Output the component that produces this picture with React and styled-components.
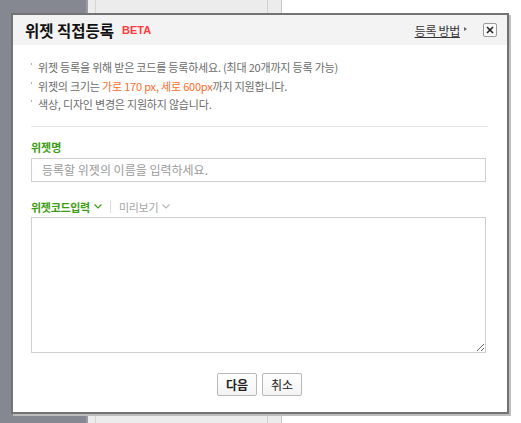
import styled, { createGlobalStyle } from "styled-components";

const GlobalStyle = createGlobalStyle`
  html, body {
    margin: 0;
    padding: 0;
  }
  body {
    width: 521px;
    height: 423px;
    overflow: hidden;
    font-family: "Noto Sans CJK KR", "Noto Sans", sans-serif;
  }
`;

function App() {
  return (
    <>
      <GlobalStyle />
      <PageStyled>
        <div className="side"></div>
        <div className="edge"></div>
        <div className="gutter"></div>
        <div className="panel"></div>
        <div className="rail"></div>
        <div className="blank"></div>

        <DialogStyled>
          <Header>
            <Title>
              위젯 직접등록 <Beta>BETA</Beta>
            </Title>
            <HeaderRight>
              <HelpLink href="#">등록 방법</HelpLink>
              <Arrow />
              <CloseButton aria-label="닫기">
                <svg width="8" height="8" viewBox="0 0 8 8">
                  <path d="M1 1L7 7M7 1L1 7" stroke="#222" strokeWidth="1.6" />
                </svg>
              </CloseButton>
            </HeaderRight>
          </Header>

          <Body>
            <InfoList>
              <li>위젯 등록을 위해 받은 코드를 등록하세요. (최대 20개까지 등록 가능)</li>
              <li>
                위젯의 크기는 <Accent>가로 170 px, 세로 600px</Accent>까지 지원합니다.
              </li>
              <li>색상, 디자인 변경은 지원하지 않습니다.</li>
            </InfoList>

            <FieldLabel>위젯명</FieldLabel>
            <TextInput placeholder="등록할 위젯의 이름을 입력하세요." />

            <TabRow>
              <Tab $active>
                위젯코드입력 <Chevron $active />
              </Tab>
              <TabDivider />
              <Tab>
                미리보기 <Chevron />
              </Tab>
            </TabRow>
            <CodeArea />

            <ButtonRow>
              <Button $primary>다음</Button>
              <Button>취소</Button>
            </ButtonRow>
          </Body>
        </DialogStyled>
      </PageStyled>
    </>
  );
}

function Chevron({ $active }) {
  return (
    <svg width="8" height="5" viewBox="0 0 8 5" style={{ marginLeft: 4 }}>
      <path
        d="M0.5 0.5L4 4L7.5 0.5"
        fill="none"
        stroke={$active ? "#3d9d12" : "#b5b5b5"}
        strokeWidth="1.2"
      />
    </svg>
  );
}

const PageStyled = styled.div`
  position: relative;
  display: flex;
  width: 521px;
  height: 423px;

  .side {
    width: 86px;
    background: #858891;
  }
  .edge {
    width: 2px;
    background: #9a9ca2;
  }
  .gutter {
    width: 7px;
    background: #ececec;
    border-right: 1px solid #d6d6d6;
  }
  .panel {
    width: 171px;
    background: #ececec;
  }
  .rail {
    width: 13px;
    background: #ececec;
    border-left: 1px solid #d2d2d2;
    border-right: 1px solid #c8c8c8;
  }
  .blank {
    flex: 1;
    background: #fff;
  }
`;

const DialogStyled = styled.div`
  position: absolute;
  left: 11px;
  top: 13px;
  width: 494px;
  height: 397px;
  background: #fff;
  border: 2px solid #737373;
  box-shadow: 2px 2px 0 #bdbdbd;
  display: flex;
  flex-direction: column;
`;

const Header = styled.div`
  height: 30px;
  background: #f3f3f3;
  display: flex;
  align-items: center;
  justify-content: space-between;
  padding: 0 10px 0 12px;
`;

const Title = styled.h1`
  margin: 0;
  font-size: 15.5px;
  font-weight: 700;
  color: #111;
  letter-spacing: 0;
  display: flex;
  align-items: center;
  gap: 2px;
`;

const Beta = styled.span`
  font-family: "Liberation Sans", Arial, sans-serif;
  font-size: 11px;
  font-weight: 700;
  color: #ff3b3b;
  margin-left: 6px;
  letter-spacing: 0;
`;

const HeaderRight = styled.div`
  display: flex;
  align-items: center;
`;

const HelpLink = styled.a`
  font-size: 12px;
  color: #333;
  text-decoration: underline;
  letter-spacing: -0.3px;
`;

const Arrow = styled.span`
  width: 0;
  height: 0;
  border-top: 2.5px solid transparent;
  border-bottom: 2.5px solid transparent;
  border-left: 3px solid #666;
  margin: 0 0 3px 4px;
`;

const CloseButton = styled.button`
  width: 14px;
  height: 14px;
  margin-left: 16px;
  padding: 0;
  border: 1px solid #9a9a9a;
  border-radius: 2px;
  background: #fafafa;
  display: flex;
  align-items: center;
  justify-content: center;
`;

const Body = styled.div`
  flex: 1;
  padding: 13px 19px 0 18px;
  display: flex;
  flex-direction: column;
`;

const InfoList = styled.ul`
  margin: 0;
  padding: 0 0 12px;
  list-style: none;
  border-bottom: 1px solid #e6e6e6;

  li {
    position: relative;
    padding-left: 7px;
    font-size: 11px;
    line-height: 18.5px;
    color: #6b6b6b;
    letter-spacing: -0.2px;
  }
  li::before {
    content: "";
    position: absolute;
    left: 0;
    top: 5px;
    width: 1px;
    height: 2px;
    background: #b0b0b0;
  }
`;

const Accent = styled.span`
  color: #ff6a2c;
`;

const FieldLabel = styled.div`
  margin-top: 13px;
  font-size: 11px;
  font-weight: 700;
  color: #3d9d12;
  line-height: 14px;
`;

const TextInput = styled.input`
  margin: 4px 2px 0 0;
  height: 24px;
  box-sizing: border-box;
  border: 1px solid #cfcfcf;
  padding: 0 10px;
  font-family: inherit;
  font-size: 12px;
  outline: none;

  &::placeholder {
    color: #9a9a9a;
  }
`;

const TabRow = styled.div`
  margin-top: 18px;
  display: flex;
  align-items: center;
  height: 14px;
`;

const Tab = styled.span`
  display: flex;
  align-items: center;
  font-size: 11px;
  font-weight: ${(p) => (p.$active ? 700 : 400)};
  color: ${(p) => (p.$active ? "#3d9d12" : "#a5a5a5")};
  letter-spacing: -0.3px;
`;

const TabDivider = styled.span`
  width: 1px;
  height: 12px;
  background: #dcdcdc;
  margin: 0 8px;
`;

const CodeArea = styled.textarea`
  margin: 3px 2px 0 0;
  height: 136px;
  box-sizing: border-box;
  border: 1px solid #cfcfcf;
  resize: vertical;
  outline: none;
`;

const ButtonRow = styled.div`
  margin-top: 20px;
  display: flex;
  justify-content: center;
  gap: 5px;
`;

const Button = styled.button`
  width: 40px;
  height: 23px;
  padding: 0;
  border: 1px solid #b8b8b8;
  border-radius: 2px;
  background: linear-gradient(#fff, #f3f3f3);
  font-family: inherit;
  font-size: 12px;
  font-weight: ${(p) => (p.$primary ? 700 : 400)};
  color: #222;
`;

export default App;
